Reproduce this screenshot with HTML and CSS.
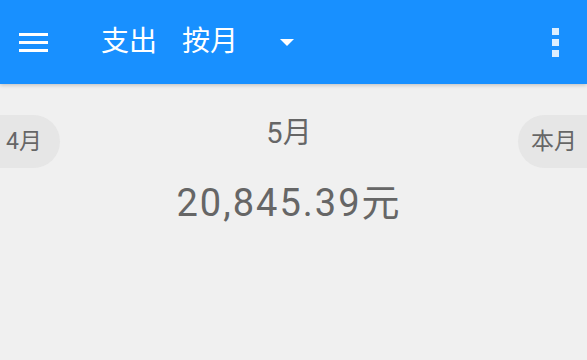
FILE: index.html
```html
<!DOCTYPE html>
<html lang="zh">
<head>
<meta charset="utf-8">
<title>支出 按月</title>
<link rel="stylesheet" href="styles.css">
</head>
<body>
<header class="appbar">
  <button class="menu-btn" aria-label="菜单">
    <span class="bar"></span><span class="bar"></span><span class="bar"></span>
  </button>
  <div class="title">
    <span class="title-main">支出</span>
    <span class="title-sub">按月</span>
  </div>
  <span class="caret"></span>
  <span class="spacer"></span>
  <button class="kebab" aria-label="更多">
    <span class="dot"></span><span class="dot"></span><span class="dot"></span>
  </button>
</header>
<main class="content">
  <div class="month-row">
    <div class="pill pill-left">4月</div>
    <div class="center">
      <div class="month">5月</div>
      <div class="amount">20,845.39元</div>
    </div>
    <div class="pill pill-right">本月</div>
  </div>
</main>
</body>
</html>
```

FILE: styles.css
```css
* { box-sizing: border-box; }
html, body { margin: 0; padding: 0; height: 100%; }
body {
  background: #f0f0f0;
  font-family: Roboto, "Noto Sans CJK SC", sans-serif;
  color: #666666;
  overflow: hidden;
}
.appbar {
  position: relative;
  z-index: 1;
  display: flex;
  align-items: center;
  height: 84px;
  background: #1890ff;
  color: #ffffff;
  box-shadow: 0 1px 4px rgba(0, 0, 0, 0.22);
}
.menu-btn {
  display: flex;
  flex-direction: column;
  gap: 5px;
  margin: 0 0 0 19px;
  padding: 0;
  border: 0;
  background: none;
  width: 29px;
}
.bar { display: block; height: 3px; background: #ffffff; }
.title {
  display: flex;
  margin-left: 53px;
  font-size: 28px;
  line-height: 34px;
  gap: 25px;
}
.caret {
  margin-left: 42px;
  width: 0;
  height: 0;
  border-left: 7px solid transparent;
  border-right: 7px solid transparent;
  border-top: 7px solid #ffffff;
}
.spacer { flex: 1; }
.kebab {
  display: flex;
  flex-direction: column;
  gap: 4px;
  margin: 0 28px 0 0;
  padding: 0;
  border: 0;
  background: none;
}
.dot { display: block; width: 7px; height: 7px; background: rgba(255, 255, 255, 0.85); }
.content { padding-top: 31px; }
.month-row { display: flex; align-items: flex-start; }
.pill {
  height: 53px;
  background: #e6e6e6;
  font-size: 23px;
  line-height: 53px;
  white-space: nowrap;
}
.pill-left {
  width: 60px;
  padding-left: 6px;
  border-radius: 0 27px 27px 0;
}
.pill-right {
  width: 69px;
  padding-left: 13px;
  border-radius: 27px 0 0 27px;
}
.center { flex: 1; text-align: center; }
.month {
  font-size: 29px;
  line-height: 32px;
  margin-top: 2px;
}
.amount {
  margin-top: 32px;
  font-size: 38px;
  line-height: 44px;
  letter-spacing: 2px;
}
```
